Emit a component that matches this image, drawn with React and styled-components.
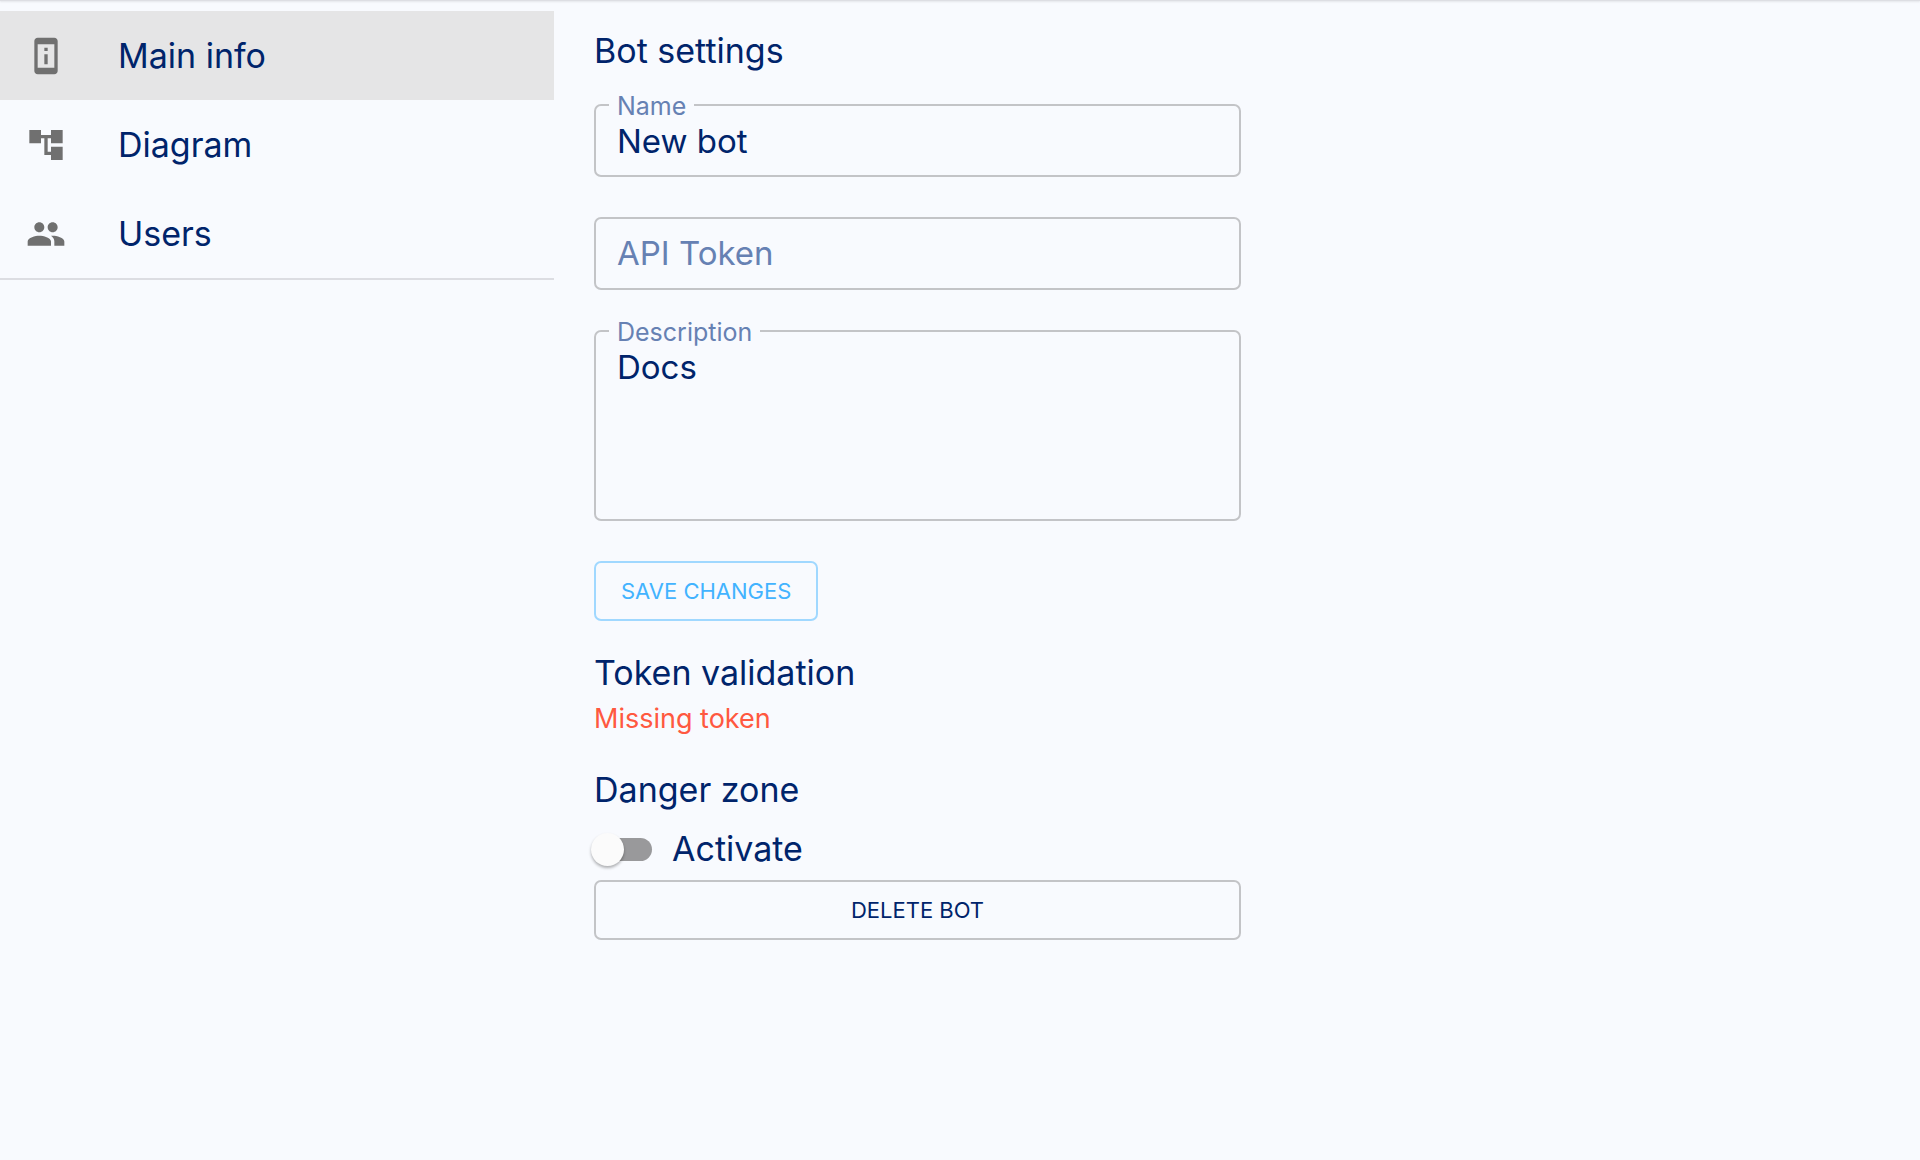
import { useState } from "react";
import styled, { createGlobalStyle } from "styled-components";

const MENU = [
  {
    id: "info",
    title: "Main info",
    icon: "M13 7h-2v2h2V7zm0 4h-2v6h2v-6zm4-9.99L7 1c-1.1 0-2 .9-2 2v18c0 1.1.9 2 2 2h10c1.1 0 2-.9 2-2V3c0-1.1-.9-1.99-2-1.99zM17 19H7V5h10v14z",
  },
  {
    id: "diagram",
    title: "Diagram",
    icon: "M22 11V3h-7v3H9V3H2v8h7V8h2v10h4v3h7v-8h-7v3h-2V8h2v3z",
  },
  {
    id: "users",
    title: "Users",
    icon: "M16 11c1.66 0 2.99-1.34 2.99-3S17.66 5 16 5c-1.66 0-3 1.34-3 3s1.34 3 3 3zm-8 0c1.66 0 2.99-1.34 2.99-3S9.66 5 8 5C6.34 5 5 6.34 5 8s1.34 3 3 3zm0 2c-2.33 0-7 1.17-7 3.5V19h14v-2.5c0-2.33-4.67-3.5-7-3.5zm8 0c-.29 0-.62.02-.97.05 1.16.84 1.97 1.97 1.97 3.45V19h6v-2.5c0-2.33-4.67-3.5-7-3.5z",
  },
];

export default function App() {
  const [page, setPage] = useState("info");
  const [bot, setBot] = useState({ name: "New bot", token: "", description: "Docs" });
  const [active, setActive] = useState(false);

  const handleChange = (field) => (e) => {
    const { value } = e.target;
    setBot((prev) => ({ ...prev, [field]: value }));
  };

  return (
    <>
      <GlobalStyle />
      <TopEdge />
      <Layout>
        <Sidebar>
          {MENU.map((item) => (
            <MenuItem
              key={item.id}
              type="button"
              $selected={item.id === page}
              onClick={() => setPage(item.id)}
            >
              <MenuIcon viewBox="0 0 24 24" aria-hidden="true">
                <path d={item.icon} />
              </MenuIcon>
              {item.title}
            </MenuItem>
          ))}
        </Sidebar>

        <Content>
          <Form onSubmit={(e) => e.preventDefault()}>
            <Title>Bot settings</Title>
            <Field>
              <Input id="name" type="text" value={bot.name} onChange={handleChange("name")} />
              <Label htmlFor="name" $shrunk={!!bot.name}>Name</Label>
            </Field>
            <Field>
              <Input id="token" type="text" value={bot.token} onChange={handleChange("token")} />
              <Label htmlFor="token" $shrunk={!!bot.token}>API Token</Label>
            </Field>
            <Field>
              <TextArea id="description" value={bot.description} onChange={handleChange("description")} />
              <Label htmlFor="description" $shrunk={!!bot.description}>Description</Label>
            </Field>
            <SaveButton type="submit">Save changes</SaveButton>
          </Form>

          <Section>
            <Title>Token validation</Title>
            {!bot.token && <ErrorText>Missing token</ErrorText>}
          </Section>

          <Section>
            <Title>Danger zone</Title>
            <SwitchRow>
              <Switch
                type="checkbox"
                checked={active}
                onChange={(e) => setActive(e.target.checked)}
              />
              Activate
            </SwitchRow>
            <DeleteButton type="button">Delete bot</DeleteButton>
          </Section>
        </Content>
      </Layout>
    </>
  );
}

const GlobalStyle = createGlobalStyle`
  * {
    box-sizing: border-box;
  }
  body {
    margin: 0;
    background: #f8fafe;
    color: #00246b;
    font-family: Inter, sans-serif;
    font-size: 34px;
    line-height: 48px;
  }
  button, input, textarea {
    font: inherit;
    color: inherit;
  }
`;

const TopEdge = styled.div`
  height: 1px;
  background: #dddee3;
  box-shadow: 0 1px 2px rgba(0, 0, 0, 0.12);
`;

const Layout = styled.div`
  display: flex;
  align-items: flex-start;
  gap: 40px;
  padding: 10px 40px 40px 0;
`;

const Sidebar = styled.nav`
  flex: 0 1 554px;
  display: flex;
  flex-direction: column;
  border-bottom: 2px solid #dcdde2;
`;

const MenuItem = styled.button`
  display: flex;
  align-items: center;
  gap: 52px;
  height: 89px;
  padding: 0 26px;
  border: none;
  background: ${(p) => (p.$selected ? "#e5e5e6" : "transparent")};
  text-align: left;
  cursor: pointer;
`;

const MenuIcon = styled.svg`
  flex: none;
  width: 40px;
  height: 40px;
  fill: #707070;
`;

const Content = styled.main`
  flex: 0 1 647px;
  min-width: 0;
  padding-top: 16px;
`;

const Form = styled.form`
  display: flex;
  flex-direction: column;
  align-items: flex-start;
`;

const Title = styled.h2`
  margin: 0;
  font-size: 34px;
  font-weight: 400;
  line-height: 48px;
`;

const Field = styled.div`
  position: relative;
  display: flex;
  width: 100%;
  margin-bottom: 40px;

  ${Title} + & {
    margin-top: 29px;
  }
`;

const Input = styled.input`
  width: 100%;
  height: 73px;
  padding: 0 21px;
  border: 2px solid #c3c4c7;
  border-radius: 7px;
  background: transparent;
  font-size: 33px;
  outline: none;
`;

const TextArea = styled.textarea`
  width: 100%;
  height: 191px;
  padding: 11px 21px;
  border: 2px solid #c3c4c7;
  border-radius: 7px;
  background: transparent;
  font-size: 33px;
  outline: none;
  resize: none;
`;

const Label = styled.label`
  position: absolute;
  left: 15px;
  top: ${(p) => (p.$shrunk ? "-13px" : "12px")};
  padding: 0 8px;
  background: #f8fafe;
  color: #6681b3;
  font-size: ${(p) => (p.$shrunk ? "25px" : "33px")};
  line-height: ${(p) => (p.$shrunk ? "30px" : "48px")};
`;

const Button = styled.button`
  height: 60px;
  padding: 0 25px;
  border: 2px solid #c3c4c7;
  border-radius: 7px;
  background: transparent;
  font-size: 22px;
  line-height: 40px;
  text-transform: uppercase;
  cursor: pointer;
`;

const SaveButton = styled(Button)`
  border-color: #a0d8ff;
  color: #42b3ff;
`;

const DeleteButton = styled(Button)`
  width: 100%;
`;

const Section = styled.section`
  margin-top: 28px;
`;

const ErrorText = styled.p`
  margin: 2px 0 0;
  color: #ff5840;
  font-size: 27px;
  line-height: 39px;
`;

const SwitchRow = styled.label`
  display: flex;
  align-items: center;
  gap: 20px;
  height: 62px;
  margin-top: 4px;
`;

const Switch = styled.input`
  appearance: none;
  position: relative;
  width: 57px;
  height: 23px;
  margin: 0 0 0 1px;
  border-radius: 12px;
  background: ${(p) => (p.checked ? "#42b3ff" : "#99999b")};
  cursor: pointer;

  &::before {
    content: "";
    position: absolute;
    top: -5px;
    left: ${(p) => (p.checked ? "28px" : "-4px")};
    width: 33px;
    height: 33px;
    border-radius: 50%;
    background: #fbfbfb;
    box-shadow: 0 2px 3px rgba(0, 0, 0, 0.3);
  }
`;
